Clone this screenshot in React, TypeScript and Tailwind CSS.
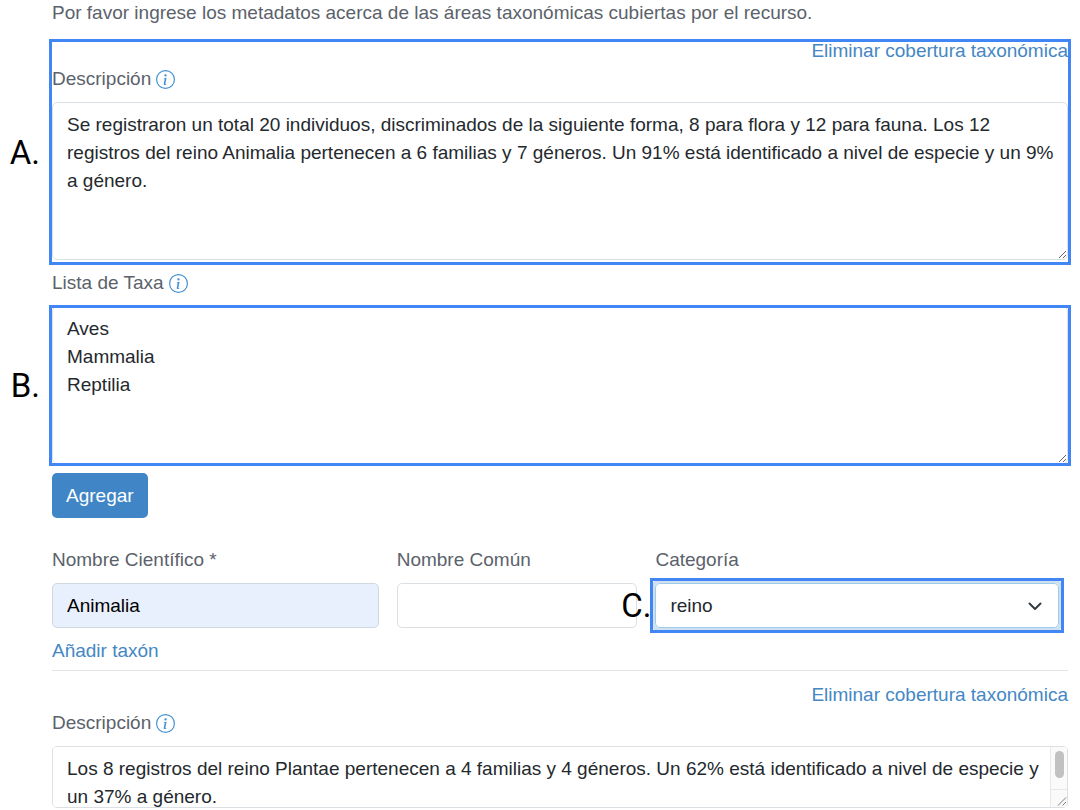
import type { ReactNode } from "react";
import { BsInfoCircle } from "react-icons/bs";

const CONTROL =
  "block w-full rounded-[5px] border border-[#dbe0e5] bg-white pl-[14px] text-[19px] leading-[28px] text-[#24292e] outline-none";

function Callout({ letter, className }: { letter: string; className: string }) {
  return (
    <div
      className={`pointer-events-none absolute flex items-center border-3 border-[#4285f4] ${className}`}
    >
      <span className="absolute right-full mr-3 font-[Roboto,sans-serif] text-[33px] leading-none text-black">
        {letter}.
      </span>
    </div>
  );
}

function FieldLabel({ htmlFor, children, info }: { htmlFor: string; children: ReactNode; info?: boolean }) {
  return (
    <div className="flex items-center gap-[5px]">
      <label htmlFor={htmlFor}>{children}</label>
      {info && (
        <button type="button" aria-label="Información" className="text-[#4190d2]">
          <BsInfoCircle className="size-[19px]" />
        </button>
      )}
    </div>
  );
}

function RemoveCoverage() {
  return (
    <div className="text-right">
      <a href="#eliminar" className="text-[#4487c4]">
        Eliminar cobertura taxonómica
      </a>
    </div>
  );
}

export default function App() {
  return (
    <main className="bg-white pr-3 pl-[52px] font-['Liberation_Sans',Arial,sans-serif] text-[19px] leading-[28px] text-[#5b626b]">
      <p className="-mt-px">Por favor ingrese los metadatos acerca de las áreas taxonómicas cubiertas por el recurso.</p>

      <section className="relative mt-[10px]">
        <RemoveCoverage />
        <FieldLabel htmlFor="descripcion-1" info>
          Descripción
        </FieldLabel>
        <textarea
          id="descripcion-1"
          className={`${CONTROL} mt-[9px] h-[158px] resize py-2`}
          defaultValue="Se registraron un total 20 individuos, discriminados de la siguiente forma, 8 para flora y 12 para fauna. Los 12 registros del reino Animalia pertenecen a 6 familias y 7 géneros. Un 91% está identificado a nivel de especie y un 9% a género."
        />
        <Callout letter="A" className="top-[2px] -right-[3px] -bottom-[5px] -left-[3px]" />
      </section>

      <section className="mt-[9px]">
        <FieldLabel htmlFor="lista-taxa" info>
          Lista de Taxa
        </FieldLabel>
        <div className="relative mt-[9px]">
          <textarea
            id="lista-taxa"
            className={`${CONTROL} h-[158px] resize py-2`}
            defaultValue={"Aves\nMammalia\nReptilia"}
          />
          <Callout letter="B" className="-top-px -right-[3px] -bottom-[2px] -left-[3px]" />
        </div>
        <button type="button" className="mt-[9px] h-[45px] rounded-[5px] bg-[#4086c6] px-[14px] text-white">
          Agregar
        </button>
      </section>

      <section className="mt-[28px]">
        <div className="grid grid-cols-[327fr_241fr_404fr] gap-[18px] pr-[9px]">
          <div>
            <FieldLabel htmlFor="nombre-cientifico">Nombre Científico *</FieldLabel>
            <input
              id="nombre-cientifico"
              type="text"
              defaultValue="Animalia"
              className="mt-[9px] block h-[45px] w-full rounded-[5px] border border-[#d0d8e2] bg-[#e8f0fe] px-[14px] text-black outline-none"
            />
          </div>
          <div>
            <FieldLabel htmlFor="nombre-comun">Nombre Común</FieldLabel>
            <input id="nombre-comun" type="text" className={`${CONTROL} mt-[9px] h-[45px]`} />
          </div>
          <div>
            <FieldLabel htmlFor="categoria">Categoría</FieldLabel>
            <div className="relative mt-[9px] rounded-[5px] ring-4 ring-[#cfe1f1]">
              <select
                id="categoria"
                defaultValue="reino"
                className="block h-[45px] w-full appearance-none rounded-[5px] border border-[#9fcbea] bg-white px-[14px] text-[#24292e] outline-none"
              >
                <option value="reino">reino</option>
              </select>
              <svg
                viewBox="0 0 16 16"
                className="pointer-events-none absolute inset-y-0 right-4 my-auto size-4"
                fill="none"
                stroke="#343a40"
                strokeWidth="2"
                strokeLinecap="round"
                strokeLinejoin="round"
                aria-hidden="true"
              >
                <path d="m2.500 5.500 5.500 5.500 5.500-5.500" />
              </svg>
              <Callout letter="C" className="-inset-[5px] [&>span]:mr-[2px]" />
            </div>
          </div>
        </div>
        <div className="mt-[9px]">
          <a href="#anadir" className="text-[#4487c4]">
            Añadir taxón
          </a>
        </div>
      </section>

      <hr className="mt-[5px] border-[#e3e6e9]" />

      <section className="mt-[10px]">
        <RemoveCoverage />
        <FieldLabel htmlFor="descripcion-2" info>
          Descripción
        </FieldLabel>
        <div className="relative mt-[9px]">
          <textarea
            id="descripcion-2"
            className={`${CONTROL} h-[62px] resize-none overflow-y-scroll py-2 pr-[18px]`}
            defaultValue={
              "Los 8 registros del reino Plantae pertenecen a 4 familias y 4 géneros. Un 62% está identificado a nivel de especie y un 37% a género.\n"
            }
          />
          <div
            aria-hidden="true"
            className="pointer-events-none absolute inset-y-px right-px flex w-[17px] flex-col rounded-r-[4px] border-l border-[#e8e8e8] bg-[#fafafa]"
          >
            <div className="flex flex-1 justify-center border-b border-[#e8e8e8] pt-1">
              <div className="h-[27px] w-[9px] rounded-full bg-[#c1c1c1]" />
            </div>
            <svg viewBox="0 0 16 17" className="h-[17px] w-4" fill="none" stroke="#7c7c7c" strokeWidth="1">
              <path d="M7 15.500 15 7.500M11.500 15.500 15 12" />
            </svg>
          </div>
        </div>
      </section>
    </main>
  );
}
